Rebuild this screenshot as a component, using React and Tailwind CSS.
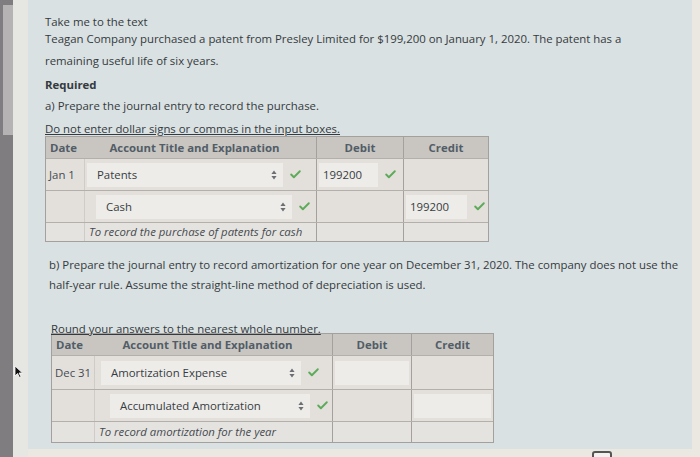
import { Check } from "lucide-react";

const font = { fontFamily: '"Open Sans", "Liberation Sans", sans-serif' };

function Tick({ className = "" }) {
  return <Check className={`text-[#5dab5a] shrink-0 ${className}`} size={13} strokeWidth={3.5} />;
}

function Updown() {
  return (
    <svg width="6" height="10" viewBox="0 0 6 10" className="shrink-0">
      <path d="M3 0.5 L5.6 4 L0.4 4 Z M3 9.5 L5.6 6 L0.4 6 Z" fill="#6b6f73" />
    </svg>
  );
}

function Select({ label, width, indent }) {
  return (
    <div className="flex items-center gap-[6px]" style={{ marginLeft: indent }}>
      <div
        className="h-[24px] flex items-center justify-between bg-[#eeece9] pl-[10px] pr-[6px] text-[11.4px] text-[#363c42]"
        style={{ width }}
      >
        <span>{label}</span>
        <Updown />
      </div>
      <Tick />
    </div>
  );
}

function Amount({ value, width, tick }) {
  return (
    <div className="flex items-center gap-[6px] pl-[2px]">
      <div
        className="h-[24px] flex items-center bg-[#eeece9] px-[4px] text-[11.4px] text-[#363c42]"
        style={{ width }}
      >
        {value}
      </div>
      {tick && <Tick />}
    </div>
  );
}

function Journal({ cols, rows, memo, dateLabel, heights }) {
  const grid = { gridTemplateColumns: cols.map((c) => `${c}px`).join(" ") };
  return (
    <div className="border border-[#a3a09d] w-fit">
      <div
        className="grid bg-[#c9c6c2] items-center text-[11.4px] font-bold text-[#525d67]"
        style={{ ...grid, height: heights[0] }}
      >
        <div className="pl-[4px]">Date</div>
        <div className="text-center pr-[12px]">Account Title and Explanation</div>
        <div className="text-center h-full flex items-center justify-center border-l border-[#a3a09d]">Debit</div>
        <div className="text-center h-full flex items-center justify-center border-l border-[#a3a09d]">Credit</div>
      </div>
      {rows.map((r, i) => (
        <div
          key={i}
          className="grid border-t border-[#b3b0ac] bg-[#e3e0dc]"
          style={{ ...grid, height: heights[i + 1] }}
        >
          <div className="flex items-center pl-[3px] text-[11.4px] text-[#454b52] border-r border-[#cfccc8]">
            {i === 0 ? dateLabel : ""}
          </div>
          <div className="flex items-center pl-[2px]">
            <Select label={r.account} width={r.selWidth} indent={r.indent} />
          </div>
          <div className="flex items-center border-l border-[#a3a09d]">
            {i === 0 && <Amount value={r.value} width={r.debitW} tick={!!r.value} />}
          </div>
          <div className="flex items-center border-l border-[#a3a09d]">
            {i === 1 && <Amount value={r.value} width={r.creditW} tick={!!r.value} />}
          </div>
        </div>
      ))}
      <div className="grid border-t border-[#b3b0ac] bg-[#e5e3df]" style={{ ...grid, height: heights[3] }}>
        <div className="border-r border-[#cfccc8]" />
        <div className="flex items-center pl-[4px] text-[11.4px] italic text-[#454b52] whitespace-nowrap">{memo}</div>
        <div className="border-l border-[#a3a09d]" />
        <div className="border-l border-[#a3a09d]" />
      </div>
    </div>
  );
}

export default function App() {
  return (
    <div className="relative w-[700px] h-[457px] overflow-hidden flex bg-[#ebe7e1]" style={font}>
      {/* left window edge */}
      <div className="w-[13px] bg-[#7f7d80] pt-[5px] pl-[3px]">
        <div className="h-[130px] bg-[#b6b3b5]" />
      </div>
      <div className="w-[15px] bg-[#e6e6e3]" />

      {/* question panel */}
      <div className="w-[664px] h-[449px] bg-[#dae1e2] pl-[17px] pt-[14px] text-[#343a40]">
        <div className="text-[11.4px] leading-[16px]">Take me to the text</div>
        <p className="text-[11.4px] leading-[22px] mt-[-2px] w-[600px]">
          Teagan Company purchased a patent from Presley Limited for $199,200 on January 1, 2020. The patent has a
          remaining useful life of six years.
        </p>
        <div className="text-[11.4px] font-bold leading-[18px] mt-[4px]">Required</div>
        <div className="text-[11.4px] leading-[18px] mt-[3px]">a) Prepare the journal entry to record the purchase.</div>
        <div className="text-[11.4px] leading-[16px] mt-[6px] mb-[-1px] underline">
          Do not enter dollar signs or commas in the input boxes.
        </div>
        <Journal
          cols={[39, 231, 87, 85]}
          heights={[21, 32, 32, 19]}
          dateLabel="Jan 1"
          memo="To record the purchase of patents for cash"
          rows={[
            { account: "Patents", selWidth: 196, indent: 0, value: "199200", debitW: 59 },
            { account: "Cash", selWidth: 196, indent: 9, value: "199200", creditW: 61 },
          ]}
        />
        <p className="text-[11.4px] leading-[20px] mt-[13px] pl-[4px] w-[640px]">
          b) Prepare the journal entry to record amortization for one year on December 31, 2020. The company does not use the
          half-year rule. Assume the straight-line method of depreciation is used.
        </p>
        <div className="pl-[6px] mt-[27px]">
          <div className="text-[11.4px] leading-[14px] mb-[-3px] underline">Round your answers to the nearest whole number.</div>
          <Journal
            cols={[43, 237, 79, 82]}
            heights={[21, 34, 32, 21]}
            dateLabel="Dec 31"
            memo="To record amortization for the year"
            rows={[
              { account: "Amortization Expense", selWidth: 200, indent: 4, value: "", debitW: 74 },
              { account: "Accumulated Amortization", selWidth: 200, indent: 13, value: "", creditW: 77 },
            ]}
          />
        </div>
      </div>
      <div className="flex-1 bg-[#ebe7e1]" />

      {/* mouse pointer */}
      <svg className="absolute left-[14px] top-[365px]" width="9" height="13" viewBox="0 0 9 13">
        <path d="M1 1 L1 11 L3.5 8.5 L5.5 12.5 L7 11.8 L5 8 L8.5 8 Z" fill="#111" stroke="#fff" strokeWidth="0.8" />
      </svg>
      {/* corner of a button in the next window */}
      <div className="absolute left-[592px] top-[451px] w-[20px] h-[10px] border-2 border-[#555] rounded-[3px] bg-[#f4f2ee]" />
    </div>
  );
}
